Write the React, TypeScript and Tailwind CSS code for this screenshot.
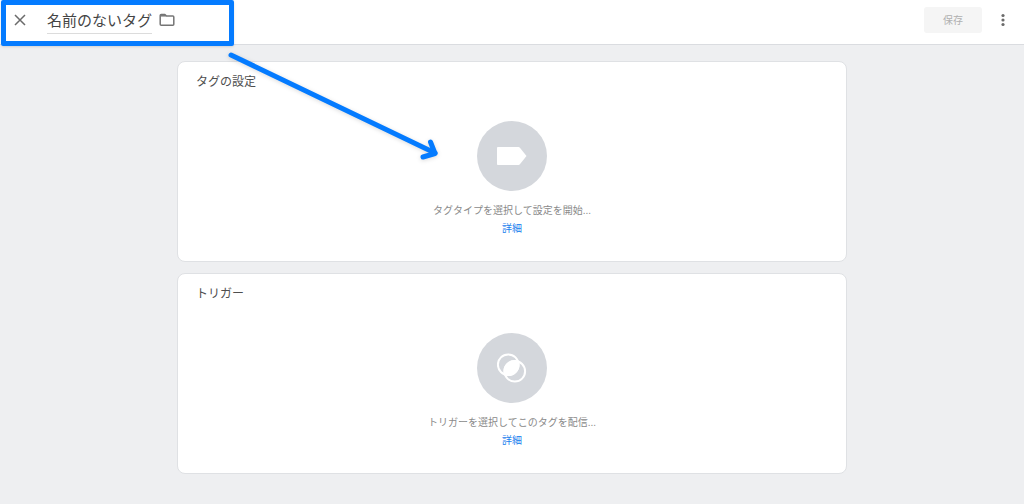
import type { ReactNode } from "react";

type SetupCardProps = {
  title: string;
  hint: string;
  icon: ReactNode;
};

function TagIcon() {
  return (
    <svg viewBox="0 0 30 18" className="w-[30px] h-[18px]" fill="currentColor" aria-hidden="true">
      <path d="M1 0h20.500c.6 0 1 .2 1.400.7L29.500 9l-6.600 8.300c-.4.500-.8.700-1.400.700H1C.5 18 0 17.500 0 17V1c0-.500.500-1 1-1z" />
    </svg>
  );
}

function TriggerIcon() {
  return (
    <svg viewBox="0 0 30 30" className="w-[30px] h-[30px]" fill="none" stroke="currentColor" strokeWidth="2" aria-hidden="true">
      <circle cx="11.200" cy="11.700" r="10.300" />
      <circle cx="17.800" cy="18.300" r="10.300" />
      <path d="M8 21.500A10.300 10.300 0 0 1 21 8.500A10.300 10.300 0 0 1 8 21.500z" fill="currentColor" />
    </svg>
  );
}

function SetupCard({ title, hint, icon }: SetupCardProps) {
  return (
    <section className="rounded-lg border border-[#dfe1e4] bg-white px-[18px] pt-3 pb-[23px]">
      <h2 className="text-xs leading-4 text-[#4f4f4f]">{title}</h2>
      <div className="mt-[31px] flex flex-col items-center">
        <button
          type="button"
          aria-label={title}
          className="flex size-[70px] items-center justify-center rounded-full bg-[#d4d7dc] text-white"
        >
          {icon}
        </button>
        <p className="mt-[11px] text-[10px] leading-[18px] text-[#8a8a8a]">{hint}</p>
        <a href="#" className="text-[10px] leading-[18px] text-[#1a80ee]">
          詳細
        </a>
      </div>
    </section>
  );
}

function Header() {
  return (
    <header className="relative flex h-[45px] items-center border-b border-[#dadce0] bg-white pb-1 pl-3 pr-3">
      <button type="button" aria-label="閉じる" className="flex size-4 items-center justify-center text-[#6b6b6b]">
        <svg viewBox="0 0 12 12" className="size-3" fill="none" stroke="currentColor" strokeWidth="1.500" aria-hidden="true">
          <path d="M1 1l10 10M11 1L1 11" />
        </svg>
      </button>
      <input
        type="text"
        aria-label="タグ名"
        defaultValue="名前のないタグ"
        className="ml-[19px] h-[27px] w-[105px] border-b border-[#dcdcdc] text-[15px] text-[#444444] outline-none"
      />
      <button type="button" aria-label="フォルダ" className="ml-[7px] text-[#757575]">
        <svg viewBox="0 0 16 14" className="w-4 h-[14px]" fill="none" stroke="currentColor" strokeWidth="1.500" strokeLinejoin="round" aria-hidden="true">
          <path d="M1.200 2.500c0-.700.300-1 1-1h3.700l1.500 1.600h6.400c.700 0 1 .3 1 1v7.200c0 .7-.3 1-1 1H2.200c-.7 0-1-.3-1-1z" />
          <path d="M1.500 2.800h5.300" />
        </svg>
      </button>
      <button
        type="button"
        disabled
        className="ml-auto h-[26px] w-[58px] rounded-[3px] bg-[#f5f5f5] text-[10px] text-[#b0b0b0]"
      >
        保存
      </button>
      <button type="button" aria-label="その他の操作" className="ml-3 flex h-5 w-[18px] items-center justify-center text-[#6b6b6b]">
        <svg viewBox="0 0 4 14" className="w-1 h-[14px]" fill="currentColor" aria-hidden="true">
          <circle cx="2" cy="2.500" r="1.600" />
          <circle cx="2" cy="7" r="1.600" />
          <circle cx="2" cy="11.500" r="1.600" />
        </svg>
      </button>
    </header>
  );
}

/* Callout frame around the tag name, with an arrow to the tag setup */
function Callout() {
  return (
    <div className="pointer-events-none absolute left-0 top-0" aria-hidden="true">
      <div className="absolute left-px top-0 h-[46px] w-[233px] rounded-[2px] border-[5px] border-[#047bff] shadow-sm" />
      <svg
        viewBox="0 0 450 170"
        className="h-[170px] w-[450px] max-w-none drop-shadow-sm"
        fill="none"
        stroke="#047bff"
        strokeWidth="5"
        strokeLinecap="round"
        strokeLinejoin="round"
      >
        <path d="M231 55L435 153" />
        <path d="M430.500 142L435 153.500L423 157" />
      </svg>
    </div>
  );
}

export default function App() {
  return (
    <div className="relative min-h-screen bg-[#eeeff1] font-['Liberation_Sans','Noto_Sans_CJK_JP',sans-serif]">
      <Header />
      <main className="mx-auto flex max-w-[670px] flex-col gap-[11px] pt-4 pb-[30px]">
        <SetupCard title="タグの設定" hint="タグタイプを選択して設定を開始..." icon={<TagIcon />} />
        <SetupCard title="トリガー" hint="トリガーを選択してこのタグを配信..." icon={<TriggerIcon />} />
      </main>
      <Callout />
    </div>
  );
}
